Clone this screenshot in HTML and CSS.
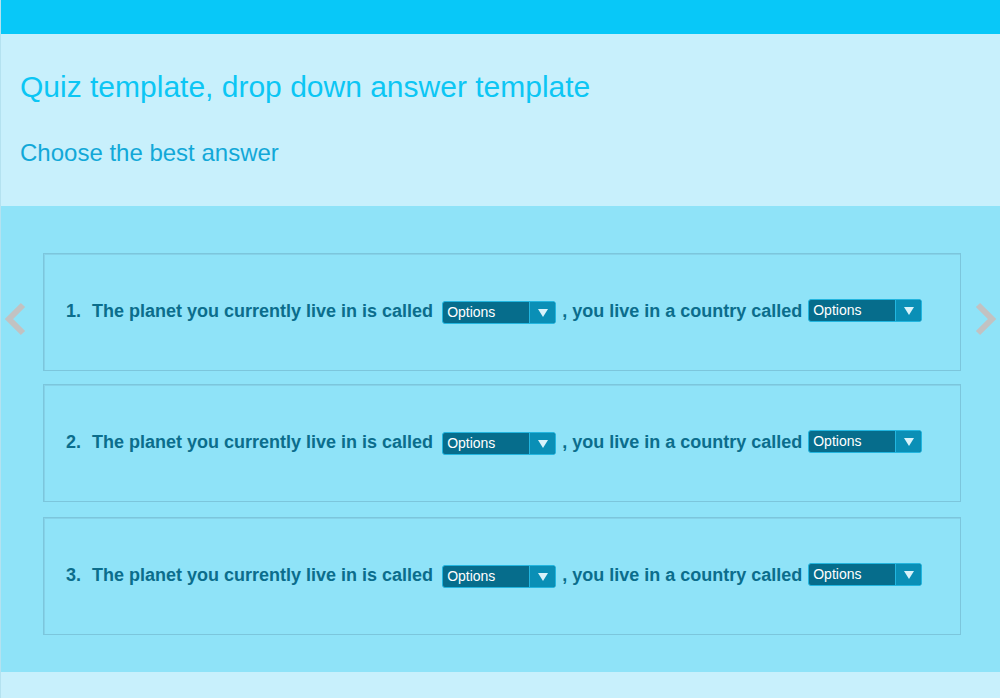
FILE: index.html
```html
<!DOCTYPE html>
<html lang="en">
<head>
<meta charset="utf-8">
<title>Quiz template</title>
<link rel="stylesheet" href="styles.css">
</head>
<body>
<div class="topbar"></div>
<header class="intro">
  <h1 class="title">Quiz template, drop down answer template</h1>
  <h2 class="subtitle">Choose the best answer</h2>
</header>
<main class="quiz">
  <button class="nav nav-prev" aria-label="Previous">
    <svg width="24" height="34" viewBox="0 0 24 34"><path d="M20 3 L6 17 L20 31" fill="none" stroke="#c2c2c2" stroke-width="6"/></svg>
  </button>
  <div class="cards">
    <div class="card">
      <div class="question">
        <span class="num">1.</span>
        <span>The planet you currently live in is called</span>
        <span class="select"><span class="sel-text">Options</span><span class="sel-arrow"></span></span>
        <span>, you live in a country called</span>
        <span class="select select-up"><span class="sel-text">Options</span><span class="sel-arrow"></span></span>
      </div>
    </div>
    <div class="card">
      <div class="question">
        <span class="num">2.</span>
        <span>The planet you currently live in is called</span>
        <span class="select"><span class="sel-text">Options</span><span class="sel-arrow"></span></span>
        <span>, you live in a country called</span>
        <span class="select select-up"><span class="sel-text">Options</span><span class="sel-arrow"></span></span>
      </div>
    </div>
    <div class="card">
      <div class="question">
        <span class="num">3.</span>
        <span>The planet you currently live in is called</span>
        <span class="select"><span class="sel-text">Options</span><span class="sel-arrow"></span></span>
        <span>, you live in a country called</span>
        <span class="select select-up"><span class="sel-text">Options</span><span class="sel-arrow"></span></span>
      </div>
    </div>
  </div>
  <button class="nav nav-next" aria-label="Next">
    <svg width="24" height="34" viewBox="0 0 24 34"><path d="M4 3 L18 17 L4 31" fill="none" stroke="#c2c2c2" stroke-width="6"/></svg>
  </button>
</main>
<footer class="footer"></footer>
</body>
</html>
```

FILE: styles.css
```css
html, body {
  margin: 0;
  padding: 0;
}
body {
  width: 1000px;
  height: 698px;
  overflow: hidden;
  font-family: "Liberation Sans", Arial, sans-serif;
  background: #c8f0fc;
  border-left: 1px solid #b4e2f0;
  box-sizing: border-box;
}
.topbar {
  height: 34px;
  background: #08c8f8;
}
.intro {
  height: 172px;
  box-sizing: border-box;
  padding: 0 0 0 19px;
  background: #c8f0fc;
  display: flex;
  flex-direction: column;
}
.title {
  margin: 36px 0 0;
  font-size: 30px;
  font-weight: normal;
  line-height: 34px;
  color: #0cc6f4;
}
.subtitle {
  margin: 36px 0 0;
  font-size: 24px;
  font-weight: normal;
  line-height: 26px;
  color: #12a8d8;
}
.quiz {
  position: relative;
  height: 466px;
  box-sizing: border-box;
  background: #8fe3f8;
  padding: 47px 0 0 42px;
}
.cards {
  display: flex;
  flex-direction: column;
  gap: 13px;
  width: 918px;
}
.card {
  height: 118px;
  box-sizing: border-box;
  border: 1px solid #7cc6dc;
  box-shadow: inset 1px 1px 0 #86d2e8;
  display: flex;
  align-items: center;
  padding: 0 0 0 22px;
}
.card:nth-child(3) {
  margin-top: 2px;
}
.question {
  display: flex;
  align-items: center;
  font-size: 18px;
  font-weight: bold;
  color: #0b6d8c;
  white-space: nowrap;
  margin-top: -2px;
}
.num {
  margin-right: 11px;
}
.select {
  display: inline-flex;
  width: 114px;
  height: 23px;
  box-sizing: border-box;
  border: 1px solid #22b6e0;
  border-radius: 3px;
  background: #066d8c;
  margin: 2px 6px 0 9px;
  overflow: hidden;
  font-weight: normal;
}
.select-up {
  margin: 0 0 2px 6px;
}
.sel-text {
  flex: 1;
  color: #ffffff;
  font-size: 14px;
  line-height: 21px;
  padding-left: 4px;
}
.sel-arrow {
  width: 25px;
  background: #0a8fb6;
  border-left: 1px solid #22b6e0;
  position: relative;
}
.sel-arrow::after {
  content: "";
  position: absolute;
  left: 8px;
  top: 7px;
  border-left: 5px solid transparent;
  border-right: 5px solid transparent;
  border-top: 8px solid #d8f2fa;
}
.nav {
  position: absolute;
  top: 96px;
  width: 24px;
  height: 34px;
  padding: 0;
  border: 0;
  background: none;
}
.nav svg {
  display: block;
}
.nav-prev {
  left: 2px;
}
.nav-next {
  left: 973px;
}
.footer {
  height: 26px;
  background: #c8f0fc;
}
```
